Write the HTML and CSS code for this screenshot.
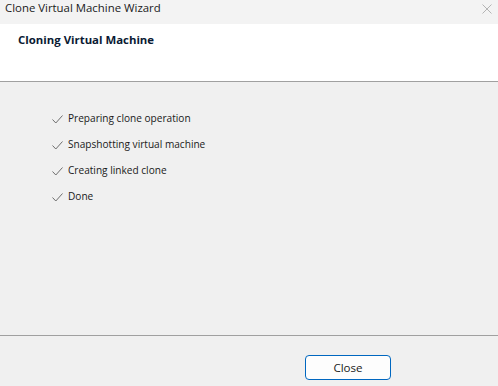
FILE: index.html
```html
<!DOCTYPE html>
<html lang="en">
<head>
    <meta charset="UTF-8">
    <title>Clone Virtual Machine Wizard</title>
    <link rel="stylesheet" href="styles.css">
</head>
<body>
    <div class="window">
        <div class="titlebar">
            <span class="title">Clone Virtual Machine Wizard</span>
            <svg class="close-x" width="10" height="10" viewBox="0 0 10 10">
                <path d="M0.5 0.5 L9.5 9.5 M9.5 0.5 L0.5 9.5" stroke="#b4b4b4" stroke-width="1" fill="none"/>
            </svg>
        </div>
        <div class="header">
            <h1>Cloning Virtual Machine</h1>
        </div>
        <div class="content">
            <ul class="steps">
                <li><svg class="check" width="11" height="9" viewBox="0 0 11 9"><path d="M0.5 4.5 L3.8 8 L10.5 0.5" stroke="#6e6e6e" stroke-width="1" fill="none"/></svg>Preparing clone operation</li>
                <li><svg class="check" width="11" height="9" viewBox="0 0 11 9"><path d="M0.5 4.5 L3.8 8 L10.5 0.5" stroke="#6e6e6e" stroke-width="1" fill="none"/></svg>Snapshotting virtual machine</li>
                <li><svg class="check" width="11" height="9" viewBox="0 0 11 9"><path d="M0.5 4.5 L3.8 8 L10.5 0.5" stroke="#6e6e6e" stroke-width="1" fill="none"/></svg>Creating linked clone</li>
                <li><svg class="check" width="11" height="9" viewBox="0 0 11 9"><path d="M0.5 4.5 L3.8 8 L10.5 0.5" stroke="#6e6e6e" stroke-width="1" fill="none"/></svg>Done</li>
            </ul>
        </div>
        <div class="footer">
            <button class="btn">Close</button>
        </div>
    </div>
</body>
</html>
```

FILE: styles.css
```css
* {
    margin: 0;
    padding: 0;
    box-sizing: border-box;
}

body {
    font-family: 'Open Sans', 'Noto Sans', sans-serif;
    font-size: 12px;
    color: #000;
    background: #f0f0f0;
}

.window {
    width: 498px;
    height: 386px;
    display: flex;
    flex-direction: column;
}

.titlebar {
    height: 24px;
    background: #f3f3f3;
    display: flex;
    align-items: flex-start;
    justify-content: space-between;
    padding: 0 6px 0 5px;
}

.title {
    font-size: 11.4px;
    line-height: 16px;
    color: #1a1a1a;
}

.close-x {
    margin-top: 4px;
}

.header {
    height: 58px;
    background: #fff;
    border-bottom: 1px solid #a0a0a0;
    padding: 8px 18px;
}

h1 {
    font-size: 11.4px;
    font-weight: 700;
    color: #0a1a33;
}

.content {
    flex: 1;
    padding: 27px 52px;
    border-bottom: 1px solid #a0a0a0;
}

.steps {
    list-style: none;
    display: flex;
    flex-direction: column;
    gap: 9px;
}

.steps li {
    display: flex;
    align-items: center;
    height: 17px;
    font-size: 10.1px;
    color: #1a1a1a;
}

.check {
    margin-right: 5px;
    margin-top: 3px;
}

.footer {
    height: 50px;
    display: flex;
    justify-content: flex-end;
    padding: 19px 107px 0 0;
}

.btn {
    width: 86px;
    height: 25px;
    background: #fdfdfd;
    border: 1px solid #0067c0;
    border-radius: 4px;
    font-family: inherit;
    font-size: 11.6px;
    color: #1a1a1a;
}
```
